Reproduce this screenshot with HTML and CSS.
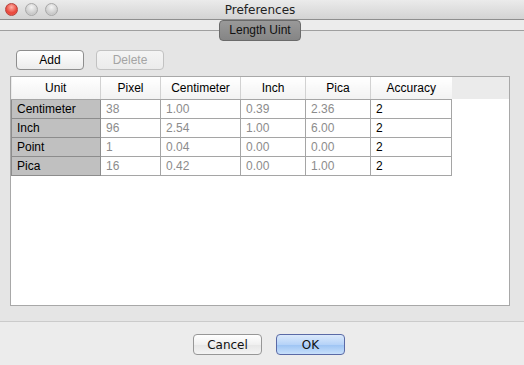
FILE: index.html
```html
<!DOCTYPE html>
<html lang="en">
<head>
	<meta charset="UTF-8">
	<title>Preferences</title>
	<link rel="stylesheet" href="styles.css">
</head>
<body>
	<div class="window">
		<div class="titlebar">
			<div class="lights">
				<span class="light red"></span>
				<span class="light"></span>
				<span class="light"></span>
			</div>
			<div class="title">Preferences</div>
		</div>
		<div class="tabbar">
			<div class="tab">Length Uint</div>
		</div>
		<div class="content">
			<div class="toolbar">
				<button class="btn">Add</button>
				<button class="btn" disabled>Delete</button>
			</div>
			<div class="tablebox">
				<table class="units">
					<colgroup>
						<col class="c-unit">
						<col class="c-pixel">
						<col class="c-cm">
						<col class="c-inch">
						<col class="c-pica">
						<col class="c-acc">
					</colgroup>
					<thead>
						<tr>
							<th>Unit</th>
							<th>Pixel</th>
							<th>Centimeter</th>
							<th>Inch</th>
							<th>Pica</th>
							<th>Accuracy</th>
						</tr>
					</thead>
					<tbody>
						<tr>
							<td class="name">Centimeter</td>
							<td>38</td>
							<td>1.00</td>
							<td>0.39</td>
							<td>2.36</td>
							<td class="acc">2</td>
						</tr>
						<tr>
							<td class="name">Inch</td>
							<td>96</td>
							<td>2.54</td>
							<td>1.00</td>
							<td>6.00</td>
							<td class="acc">2</td>
						</tr>
						<tr>
							<td class="name">Point</td>
							<td>1</td>
							<td>0.04</td>
							<td>0.00</td>
							<td>0.00</td>
							<td class="acc">2</td>
						</tr>
						<tr>
							<td class="name">Pica</td>
							<td>16</td>
							<td>0.42</td>
							<td>0.00</td>
							<td>1.00</td>
							<td class="acc">2</td>
						</tr>
					</tbody>
				</table>
			</div>
		</div>
		<div class="footer">
			<button class="dlg">Cancel</button>
			<button class="dlg ok">OK</button>
		</div>
	</div>
</body>
</html>
```

FILE: styles.css
```css
*{
	margin:0;
	padding:0;
	box-sizing:border-box;
}
body{
	background:#e5e5e5;
	font-family:"Liberation Sans",Arial,sans-serif;
	font-size:12px;
	color:#000;
}
.window{
	width:524px;
	height:365px;
	display:flex;
	flex-direction:column;
}
/*----------------titlebar----------------*/
.titlebar{
	height:20px;
	border-bottom:1px solid #8e8e8e;
	background:linear-gradient(#ebebeb,#d3d3d3);
	display:grid;
	grid-template-columns:1fr auto 1fr;
	align-items:center;
}
.lights{
	display:flex;
	gap:7px;
	padding-left:5px;
}
.light{
	width:13px;
	height:13px;
	border-radius:50%;
	border:1px solid #a8a8a8;
	background:radial-gradient(circle at 50% 30%,#f4f4f4,#c8c8c8 70%,#dedede);
}
.light.red{
	border-color:#b5423c;
	background:radial-gradient(circle at 50% 30%,#ffb3a8,#e8453a 60%,#f0695c);
}
.title{
	font-family:"DejaVu Sans",sans-serif;
	font-size:12px;
	color:#222;
	padding-right:4px;
}
/*----------------tab----------------*/
.tabbar{
	height:21px;
	display:flex;
	justify-content:center;
	padding-right:4px;
	background:linear-gradient(#ececec 0,#ececec 10px,#9f9f9f 10px,#9f9f9f 11px,#e5e5e5 11px);
}
.tab{
	width:82px;
	height:21px;
	border:1px solid #6a6a6a;
	border-radius:4px;
	background:linear-gradient(#999,#858585);
	text-align:center;
	line-height:19px;
	color:#111;
}
/*----------------content----------------*/
.content{
	flex:1;
	padding:9px 14px 15px 10px;
	display:flex;
	flex-direction:column;
}
.toolbar{
	display:flex;
	gap:12px;
	padding-left:6px;
}
.btn{
	width:68px;
	height:20px;
	border:1px solid #8e8e8e;
	border-radius:4px;
	background:linear-gradient(#fff,#ececec);
	font-family:"Liberation Sans",Arial,sans-serif;
	font-size:12px;
	color:#000;
}
.btn:disabled{
	border-color:#c2c2c2;
	color:#a4a4a4;
	background:linear-gradient(#f4f4f4,#ebebeb);
}
.tablebox{
	margin-top:6px;
	height:230px;
	border:1px solid #a8a8a8;
	background:linear-gradient(#ebebeb 0,#ebebeb 22px,#fff 22px);
}
.units{
	width:440px;
	border-collapse:collapse;
	table-layout:fixed;
}
.c-unit{width:89px;}
.c-pixel{width:60px;}
.c-cm{width:80px;}
.c-inch{width:65px;}
.c-pica{width:65px;}
.c-acc{width:81px;}
.units th{
	height:22px;
	font-weight:normal;
	background:linear-gradient(#fff,#f2f2f2);
	border-right:1px solid #d2d2d2;
	border-bottom:1px solid #a5a5a5;
}
.units th:last-child{
	border-right:none;
}
.units td{
	height:19px;
	padding-left:5px;
	border:1px solid #a5a5a5;
	color:#8c8c8c;
	white-space:nowrap;
}
.units td.name{
	background:#c0c0c0;
	border-color:#8c8c8c;
	color:#000;
}
.units td.acc{
	color:#000;
}
/*----------------footer----------------*/
.footer{
	height:44px;
	border-top:1px solid #cbcbcb;
	background:#ececec;
	display:flex;
	justify-content:center;
	gap:14px;
	padding-top:12px;
	padding-left:14px;
}
.dlg{
	width:69px;
	height:21px;
	border:1px solid #979797;
	border-radius:4px;
	background:linear-gradient(#fff,#f0f0f0 50%,#e6e6e6 51%,#f4f4f4);
	font-family:"DejaVu Sans",sans-serif;
	font-size:12px;
	color:#111;
}
.dlg.ok{
	border-color:#5a6aa6;
	background:linear-gradient(#dbe9fb,#b6d3f8 50%,#9cc3f3 51%,#c8e0fb);
}
```
